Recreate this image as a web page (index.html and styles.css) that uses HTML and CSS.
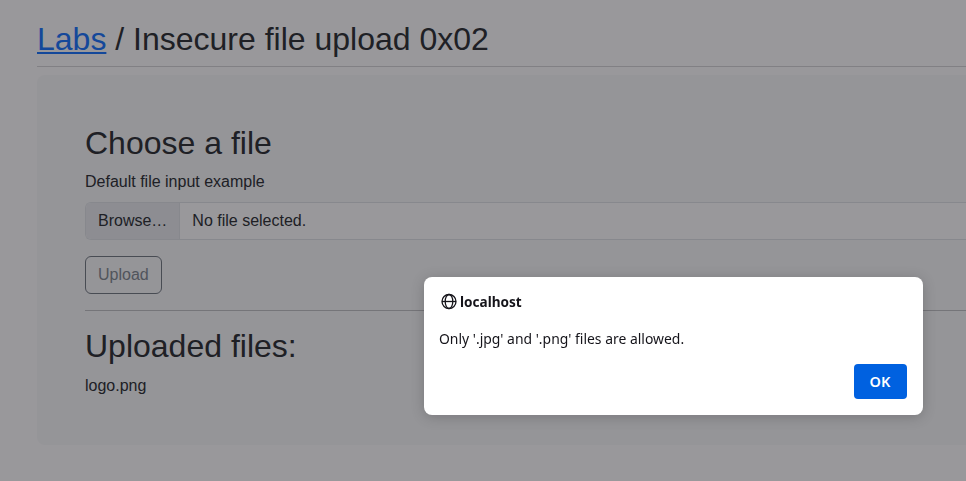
FILE: index.html
```html
<!DOCTYPE html>
<html lang="en">
<head>
<meta charset="utf-8">
<title>Labs</title>
<link rel="stylesheet" href="styles.css">
</head>
<body>
<main class="page">
  <header class="page-header"><h2><a href="#">Labs</a> / Insecure file upload 0x02</h2></header>
  <section class="panel">
    <h2>Choose a file</h2>
    <div class="label">Default file input example</div>
    <div class="file-input"><span class="browse">Browse…</span><span class="file-name">No file selected.</span></div>
    <button class="upload">Upload</button>
    <hr>
    <h2 class="uploads-title">Uploaded files:</h2>
    <div>logo.png</div>
  </section>
</main>
<div class="backdrop"></div>
<div class="dialog" role="alertdialog">
  <div class="origin">
    <svg class="globe" viewBox="0 0 16 16" fill="none" stroke="currentColor" stroke-width="1.3"><circle cx="8" cy="8.5" r="7"/><ellipse cx="8" cy="8.5" rx="3.8" ry="7"/><path d="M1 8.5h14"/></svg>
    <span class="host">localhost</span>
  </div>
  <div class="message">Only '.jpg' and '.png' files are allowed.</div>
  <button class="ok">OK</button>
</div>
</body>
</html>
```
FILE: styles.css
```css
* { box-sizing: border-box; }
body {
  margin: 0;
  height: 481px;
  overflow: hidden;
  background: #fff;
  color: #212529;
  font: 16px/24px "Liberation Sans", Arial, sans-serif;
}
.page { padding: 20px 0 0 37px; }
h2 { margin: 0 0 8px; font-size: 32px; font-weight: 400; line-height: 38.4px; }
a { color: #0d6efd; text-decoration-thickness: 2px; text-underline-offset: 2px; }
.page-header { height: 47px; border-bottom: 1px solid #d3d4d5; margin-bottom: 8px; }
.panel { height: 370px; padding: 48.6px 0 0 48px; background: #f8f9fa; border-radius: 8px 0 0 8px; }
.uploads-title { margin-bottom: 8.6px; }
.label { margin-bottom: 8px; }
.file-input {
  display: flex;
  height: 38px;
  margin-bottom: 16px;
  overflow: hidden;
  background: #fff;
  border: 1px solid #dee2e6;
  border-right: 0;
  border-radius: 6px 0 0 6px;
}
.browse { padding: 6px 12px; background: #e9ecef; border-right: 1px solid #dee2e6; }
.file-name { padding: 6px 12px; }
.upload {
  display: block;
  height: 38px;
  padding: 6px 12px;
  background: transparent;
  border: 1px solid #6c757d;
  border-radius: 6px;
  color: #7c858d;
  font: inherit;
}
hr { height: 1px; margin: 16px 0; border: 0; background: #bebfc1; }
.backdrop { position: fixed; inset: 0; background: rgba(28, 27, 34, .45); }
.dialog {
  position: fixed;
  left: 424px;
  top: 277px;
  width: 499px;
  height: 138px;
  display: flex;
  flex-direction: column;
  padding: 15px 16px 16px;
  background: #fff;
  border-radius: 8px;
  box-shadow: 0 2px 14px rgba(0, 0, 0, .2);
  color: #15141a;
  font: 15px/18px "Noto Sans", sans-serif;
}
.origin { display: flex; align-items: center; gap: 3px; height: 18px; font-weight: 700; }
.globe { width: 16px; height: 16px; margin-left: .5px; overflow: visible; }
/* Narrowed to the proportions of the system dialog font */
.host { transform: scaleX(.905); transform-origin: left; }
.message { margin: 19px 0 0 -.6px; transform: scaleX(.928); transform-origin: left; }
.ok {
  align-self: flex-end;
  width: 53px;
  height: 35px;
  margin-top: auto;
  padding: 0 1px 1px 0;
  background: #0061e0;
  border: 0;
  border-radius: 4px;
  color: #fff;
  font: inherit;
  font-size: 14.5px;
  font-weight: 600;
}
```
